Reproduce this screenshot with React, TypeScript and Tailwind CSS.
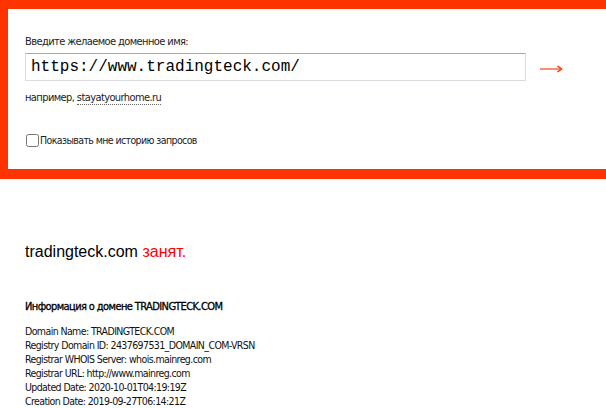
import { useState } from 'react';

const lines = [
  'Domain Name: TRADINGTECK.COM',
  'Registry Domain ID: 2437697531_DOMAIN_COM-VRSN',
  'Registrar WHOIS Server: whois.mainreg.com',
  'Registrar URL: http://www.mainreg.com',
  'Updated Date: 2020-10-01T04:19:19Z',
  'Creation Date: 2019-09-27T06:14:21Z',
];

export default function App() {
  const [showHistory, setShowHistory] = useState(false);

  return (
    <div className="min-h-screen bg-white text-black font-['DejaVu_Sans_Condensed','DejaVu_Sans',sans-serif] tracking-[-0.6px]">
      {/* Search panel */}
      <div className="border-t-[9px] border-l-[8px] border-b-[10px] border-[#ff3300] pl-[17px] pt-[26px] h-[179px]">
        <div className="text-[11px] leading-[14px] text-[#222]">Введите желаемое доменное имя:</div>
        <div className="flex items-center mt-[4px]">
          <input
            defaultValue="https://www.tradingteck.com/"
            className="w-[501px] h-[28px] border border-[#dcdce2] border-t-[#a9a9a9] px-[5px] font-['Liberation_Mono','Courier_New',monospace] text-[16px] tracking-normal text-black outline-none"
          />
          <svg className="ml-[14px] mt-[4px]" width="23" height="10" viewBox="0 0 23 10">
            <line x1="0" y1="5" x2="20" y2="5" stroke="#ff8a80" strokeWidth="2" />
            <path d="M17.5 2 L21.5 5 L17.5 8" fill="none" stroke="#ff3300" strokeWidth="1.5" />
          </svg>
        </div>
        <div className="mt-[10px] text-[11px] leading-[14px] text-[#222]">
          например,{' '}
          <span className="border-b border-dotted border-[#666]">stayatyourhome.ru</span>
        </div>
        <label className="flex items-center mt-[28px] text-[10.5px] text-[#222]">
          <input
            type="checkbox"
            checked={showHistory}
            onChange={() => setShowHistory(!showHistory)}
            className="w-[13px] h-[13px] m-0 mr-[1px] ml-[1px]"
          />
          Показывать мне историю запросов
        </label>
      </div>

      {/* Result */}
      <div className="pl-[25px] pt-[63px]">
        <div className="text-[16px] leading-[20px] tracking-normal font-['Liberation_Sans',Arial,sans-serif]">
          tradingteck.com <span className="text-[#ff0000]">занят.</span>
        </div>
        <div className="mt-[38px] text-[11px] leading-[14px] [-webkit-text-stroke:0.3px]">
          Информация о домене TRADINGTECK.COM
        </div>
        <div className="mt-[10px] text-[10.5px] leading-[14px] text-[#111]">
          {lines.map((l) => (
            <div key={l}>{l}</div>
          ))}
        </div>
      </div>
    </div>
  );
}
